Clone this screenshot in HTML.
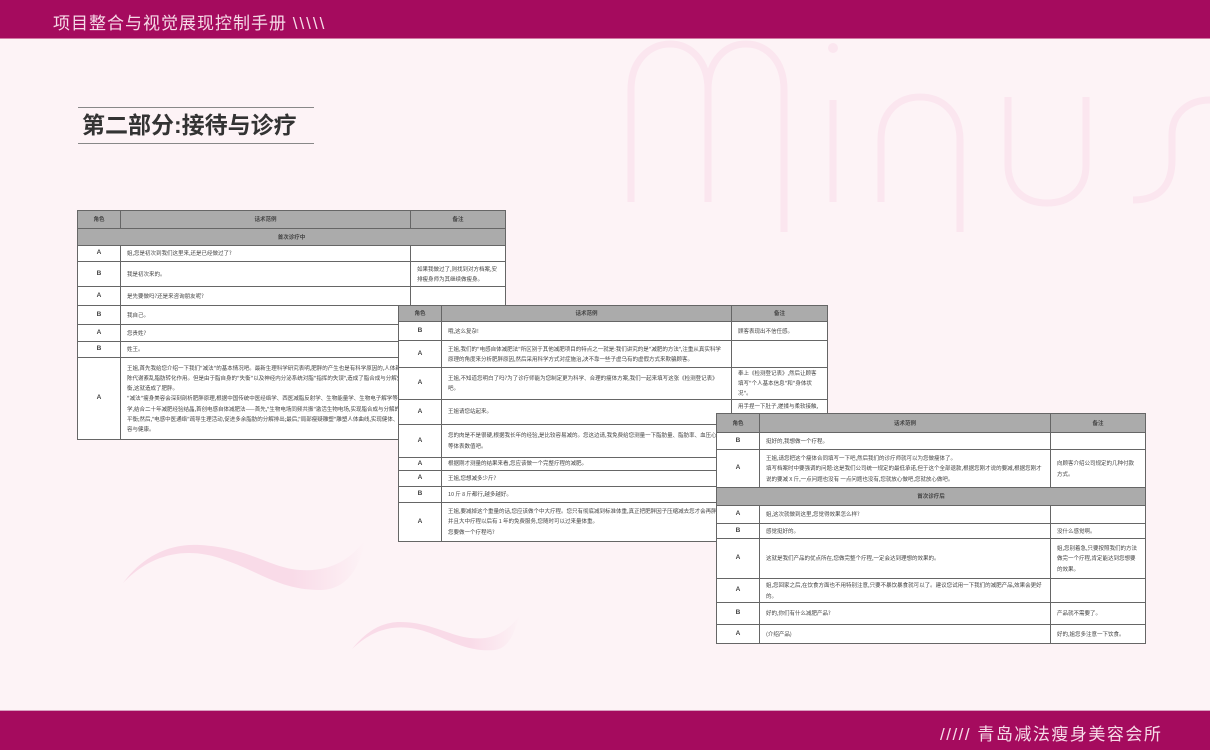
<!DOCTYPE html>
<html><head><meta charset="utf-8"><style>
*{margin:0;padding:0;box-sizing:border-box}
body{width:1210px;height:750px;background:#fdf3f6;position:relative;overflow:hidden;font-family:"Liberation Sans","Noto Sans CJK SC",sans-serif}
.bar{position:absolute;left:0;width:1210px;background:#a50b5e}
.top{top:0;height:39px;border-bottom:1px solid #d07aa5}
.bot{top:710px;height:40px;border-top:1px solid #d9a0c0}
.ht{position:absolute;left:53px;top:9px;color:#f6dbe8;font-size:17px;letter-spacing:1px}
.ht span{letter-spacing:2px}
.ft{position:absolute;left:940px;top:720px;color:#f6dbe8;font-size:17px;letter-spacing:1.5px}
.title{position:absolute;left:78px;top:107px;width:236px;height:37px;border-top:1px solid #888;border-bottom:1px solid #888;font-size:23px;font-weight:bold;color:#333;padding-left:4px;line-height:35px}
table{position:absolute;border-collapse:collapse;table-layout:fixed;background:#fff;font-size:5.5px;color:#444;font-family:"Noto Sans CJK SC",sans-serif}
td,th{border:1px solid #666;padding:0 6px;line-height:1.85;overflow:hidden;vertical-align:middle}
th{background:#ababab;font-weight:bold;text-align:center}
td.r{text-align:center;font-weight:bold;font-size:6.5px;font-family:"Liberation Sans",sans-serif;padding:0}
tr.sec td{background:#ababab;text-align:center;font-weight:bold}
</style></head><body>
<div class="bar top"></div>
<div class="ht">项目整合与视觉展现控制手册 <span>\\\\\</span></div>
<svg style="position:absolute;left:0;top:0" width="1210" height="750">
<defs><linearGradient id="g" x1="0" x2="1"><stop offset="0" stop-color="#f9dbe8"/><stop offset="0.7" stop-color="#f9dbe8"/><stop offset="1" stop-color="#fdf3f6"/></linearGradient></defs>
<g fill="none" stroke="#fbe6ef" stroke-width="7">
<path d="M631 202V90C631 60 650 44 670 44C690 44 708 60 708 90V202M708 90C708 60 726 44 746 44C766 44 784 60 784 90V232"/>
<path d="M833 100V202"/>
<path d="M881 202V140C881 112 898 97 920 97C942 97 960 112 960 140V232"/>
<path d="M1008 97V165C1008 190 1025 203 1047 203C1069 203 1086 190 1086 165V97"/>
<path d="M1133 200C1160 200 1172 185 1172 160V135C1172 112 1190 100 1210 100"/>
</g>
<circle cx="833" cy="48" r="5" fill="#fbe6ef"/>
<path d="M123 583C150 555 185 545 225 560C260 572 280 590 320 590C345 590 360 570 365 540C350 560 330 572 300 570C270 568 250 548 200 545C165 543 140 560 123 583Z" fill="url(#g)"/>
<path d="M352 649C375 627 400 622 430 633C455 643 470 652 495 650C510 648 515 630 520 615C505 635 490 640 470 638C450 636 430 622 400 622C380 622 365 633 352 649Z" fill="url(#g)"/>
</svg>
<div class="title">第二部分:接待与诊疗</div>

<table style="left:77px;top:210px;width:428px">
<colgroup><col style="width:43px"><col style="width:290px"><col style="width:95px"></colgroup>
<tr style="height:18px"><th>角色</th><th>话术范例</th><th>备注</th></tr>
<tr class="sec" style="height:17px"><td colspan="3">首次诊疗中</td></tr>
<tr style="height:16px"><td class="r">A</td><td>姐,您是初次到我们这里来,还是已经做过了?</td><td></td></tr>
<tr style="height:25px"><td class="r">B</td><td>我是初次来的。</td><td>如果我做过了,则找到对方档案,安排瘦身师为其继续做瘦身。</td></tr>
<tr style="height:19px"><td class="r">A</td><td>是先要做吗?还是来咨询朋友呢?</td><td></td></tr>
<tr style="height:19px"><td class="r">B</td><td>我自己。</td><td></td></tr>
<tr style="height:17px"><td class="r">A</td><td>您贵姓?</td><td></td></tr>
<tr style="height:16px"><td class="r">B</td><td>姓王。</td><td></td></tr>
<tr style="height:82px"><td class="r">A</td><td>王姐,首先我给您介绍一下我们"减法"的基本情况吧。最新生理科学研究表明,肥胖的产生也是有科学原因的,人体新陈代谢紊乱脂肪转化作用。但是由于脂自身的"失衡"以及神经内分泌系统对脂"指挥的失误",造成了脂合成与分解失衡,这就造成了肥胖。<br>"减法"瘦身美容会深刻剖析肥胖原理,根据中国传统中医经络学、西医减脂反射学、生物能量学、生物电子解学等科学,结合二十年减肥经验结晶,首创电感自体减肥法——首先,"生物电场同频共振"激活生物电场,实现脂合成与分解的平衡;然后,"电感中医通络"疏导生理活动,促进多余脂肪的分解排出;最后,"局部瘦疑雕塑"雕塑人体曲线,实现健体、美容与健康。</td><td></td></tr>
</table>

<table style="left:398px;top:305px;width:429px">
<colgroup><col style="width:43px"><col style="width:290px"><col style="width:96px"></colgroup>
<tr style="height:16px"><th>角色</th><th>话术范例</th><th>备注</th></tr>
<tr style="height:19px"><td class="r">B</td><td>哦,这么复杂!</td><td>顾客表现出不信任感。</td></tr>
<tr style="height:27px"><td class="r">A</td><td>王姐,我们的"电感自体减肥法"所区别于其他减肥项目的特点之一就是:我们讲究的是"减肥的方法",注重从真实科学原理的角度来分析肥胖原因,然后采用科学方式对症施治,决不靠一些子虚乌有的虚假方式来欺骗顾客。</td><td></td></tr>
<tr style="height:26px"><td class="r">A</td><td>王姐,不知道您明白了吗?为了诊疗师能为您制定更为科学、合理的瘦体方案,我们一起来填写这张《检测登记表》吧。</td><td>奉上《检测登记表》,然后让顾客填写"个人基本信息"和"身体状况"。</td></tr>
<tr style="height:25px"><td class="r">A</td><td>王姐请您站起来。</td><td>用手捏一下肚子,搓揉与柔软接触,测验后生感。</td></tr>
<tr style="height:33px"><td class="r">A</td><td>您的肉是不是很硬,根据我长年的经验,是比较容易减的。您这边请,我免费给您测量一下脂肪量、脂肪率、血压心跳等体表数值吧。</td><td></td></tr>
<tr style="height:12px"><td class="r">A</td><td>根据刚才测量的结果来看,您应该做一个完整疗程的减肥。</td><td></td></tr>
<tr style="height:16px"><td class="r">A</td><td>王姐,您想减多少斤?</td><td></td></tr>
<tr style="height:16px"><td class="r">B</td><td>10 斤 8 斤都行,越多越好。</td><td></td></tr>
<tr style="height:39px"><td class="r">A</td><td>王姐,要减掉这个重量的话,您应该做个中大疗程。您只有彻底减到标准体重,真正把肥胖因子压缩减去您才会再胖。并且大中疗程以后有 1 年的免费服务,您随时可以过来量体重。<br>您要做一个疗程吗?</td><td></td></tr>
</table>

<table style="left:716px;top:413px;width:429px">
<colgroup><col style="width:43px"><col style="width:291px"><col style="width:95px"></colgroup>
<tr style="height:19px"><th>角色</th><th>话术范例</th><th>备注</th></tr>
<tr style="height:17px"><td class="r">B</td><td>挺好的,我想做一个疗程。</td><td></td></tr>
<tr style="height:38px"><td class="r">A</td><td>王姐,请您把这个瘦体合同填写一下吧,然后我们的诊疗师就可以为您做瘦体了。<br>填写档案时中要强调的问题:这是我们公司统一规定的最低承诺,但于这个全部退款,根据您刚才说的要减,根据您刚才说的要减 X 斤,一点问题也没有 一点问题也没有,您就放心做吧,您就放心做吧。</td><td>向顾客介绍公司规定的几种付款方式。</td></tr>
<tr class="sec" style="height:18px"><td colspan="3">首次诊疗后</td></tr>
<tr style="height:18px"><td class="r">A</td><td>姐,这次就做到这里,您觉得效果怎么样?</td><td></td></tr>
<tr style="height:15px"><td class="r">B</td><td>感觉挺好的。</td><td>没什么感觉啊。</td></tr>
<tr style="height:40px"><td class="r">A</td><td>这就是我们产品的优点所在,您做完整个疗程,一定会达到理想的效果的。</td><td>姐,您别着急,只要按照我们的方法做完一个疗程,肯定能达到您想要的效果。</td></tr>
<tr style="height:24px"><td class="r">A</td><td>姐,您回家之后,在饮食方面也不用特别注意,只要不暴饮暴食就可以了。建议您试用一下我们的减肥产品,效果会更好的。</td><td></td></tr>
<tr style="height:22px"><td class="r">B</td><td>好的,你们有什么减肥产品?</td><td>产品就不需要了。</td></tr>
<tr style="height:19px"><td class="r">A</td><td>(介绍产品)</td><td>好的,姐您多注意一下饮食。</td></tr>
</table>

<div class="bar bot"></div>
<div class="ft">///// 青岛减法瘦身美容会所</div>
</body></html>
